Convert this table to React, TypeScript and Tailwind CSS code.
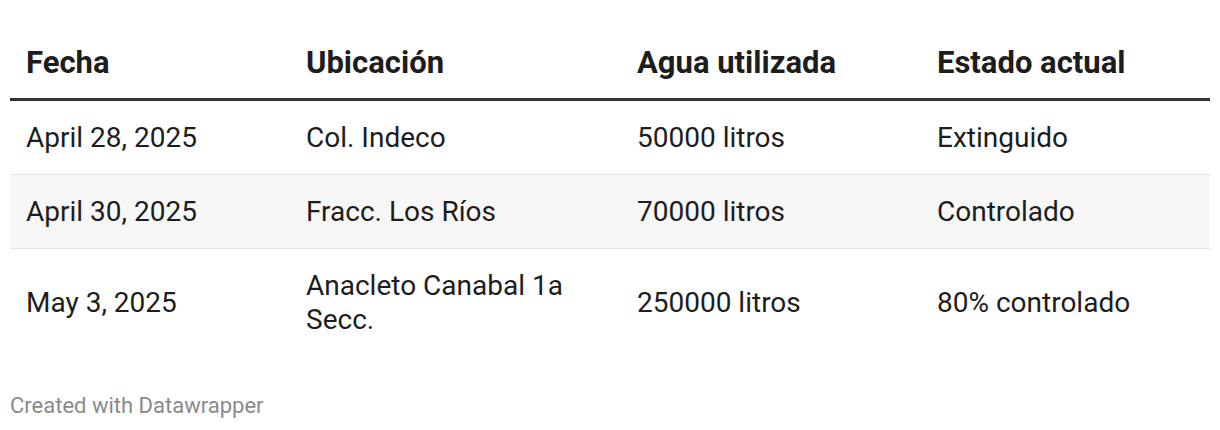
import React from "react";

const rows = [
  { fecha: "April 28, 2025", ubicacion: "Col. Indeco", agua: "50000 litros", estado: "Extinguido" },
  { fecha: "April 30, 2025", ubicacion: "Fracc. Los Ríos", agua: "70000 litros", estado: "Controlado" },
  { fecha: "May 3, 2025", ubicacion: "Anacleto Canabal 1a Secc.", agua: "250000 litros", estado: "80% controlado" },
];

const cols = "grid grid-cols-[280px_331px_300px_289px]";

export default function App() {
  return (
    <div className="w-[1220px] h-[430px] bg-white px-[10px] pt-[28px] text-[#1d1d1d] font-['Roboto',sans-serif]">
      {/* header */}
      <div className={`${cols} border-b-[3px] border-[#333333] text-[31px] font-bold leading-[36px]`}>
        {["Fecha", "Ubicación", "Agua utilizada", "Estado actual"].map(h => (
          <div key={h} className="px-[16px] pt-[17px] pb-[17px]">{h}</div>
        ))}
      </div>

      {/* body */}
      {rows.map((r, i) => (
        <div
          key={r.fecha}
          className={`${cols} items-center text-[28px] leading-[34px] ${i < rows.length - 1 ? "border-b border-[#e6e6e6]" : ""} ${i === 1 ? "bg-[#f7f7f7]" : ""}`}
        >
          <div className="px-[16px] py-[19.5px]">{r.fecha}</div>
          <div className="px-[16px] py-[19.5px]">{r.ubicacion}</div>
          <div className="px-[16px] py-[19.5px]">{r.agua}</div>
          <div className="px-[16px] py-[19.5px]">{r.estado}</div>
        </div>
      ))}

      <div className="mt-[37px] text-[22px] leading-[26px] text-[#8a8a8a]">Created with Datawrapper</div>
    </div>
  );
}
